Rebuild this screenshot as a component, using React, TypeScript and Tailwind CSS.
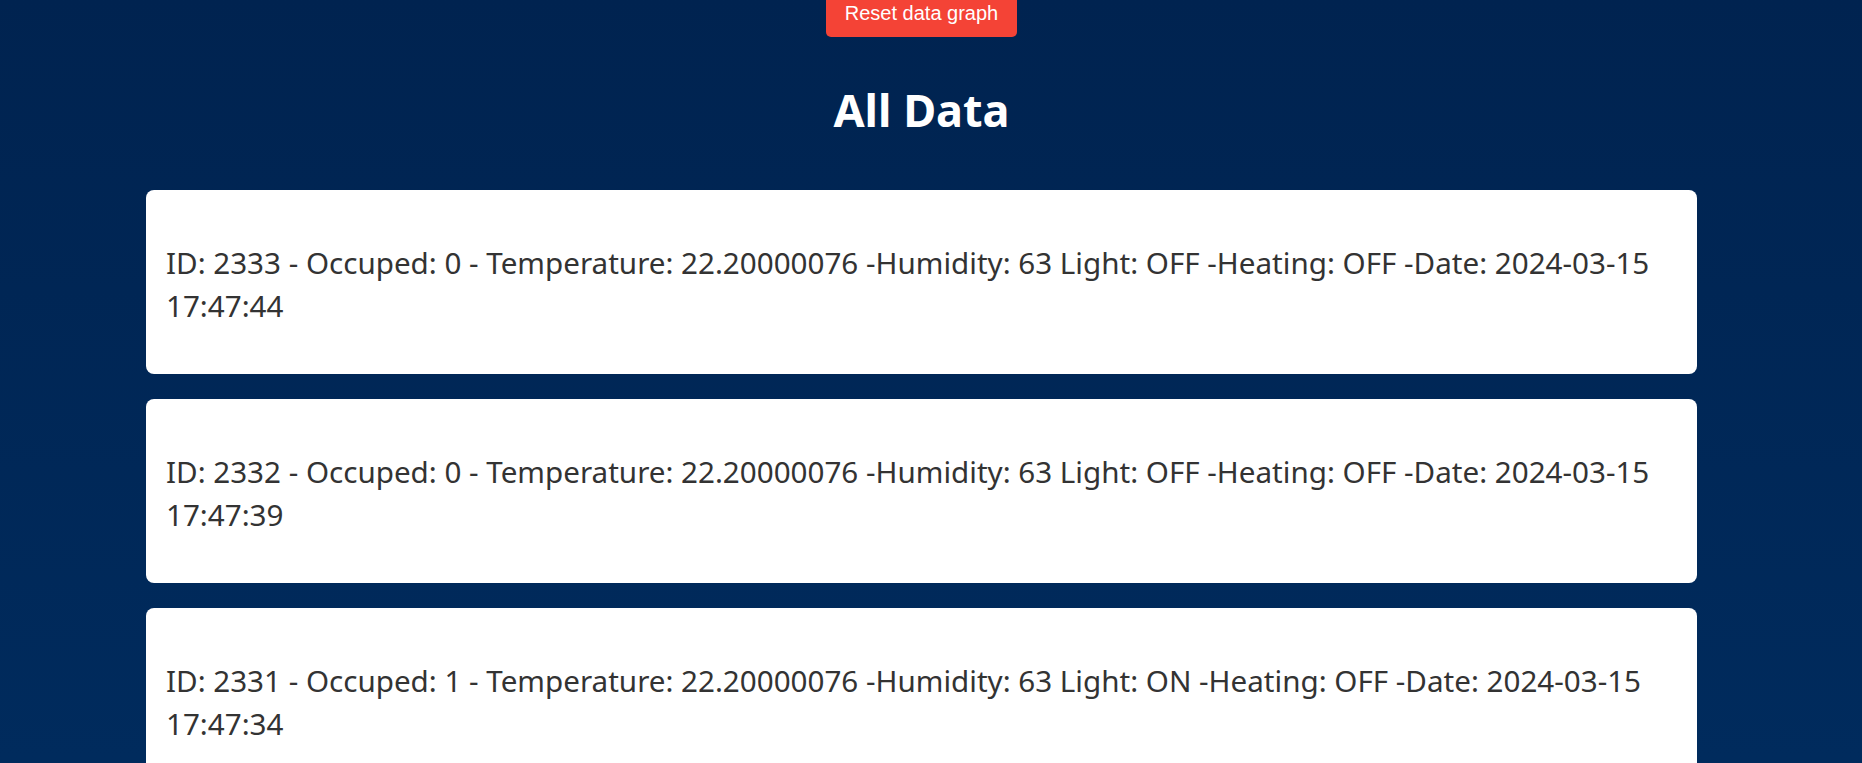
import React from 'react';

interface Reading {
  id: number;
  occupied: number;
  temperature: string;
  humidity: number;
  light: 'ON' | 'OFF';
  heating: 'ON' | 'OFF';
  date: string;
}

const READINGS: Reading[] = [
  { id: 2333, occupied: 0, temperature: '22.20000076', humidity: 63, light: 'OFF', heating: 'OFF', date: '2024-03-15 17:47:44' },
  { id: 2332, occupied: 0, temperature: '22.20000076', humidity: 63, light: 'OFF', heating: 'OFF', date: '2024-03-15 17:47:39' },
  { id: 2331, occupied: 1, temperature: '22.20000076', humidity: 63, light: 'ON', heating: 'OFF', date: '2024-03-15 17:47:34' },
  { id: 2330, occupied: 1, temperature: '22.20000076', humidity: 63, light: 'ON', heating: 'OFF', date: '2024-03-15 17:47:29' },
];

const DataCard: React.FC<{ r: Reading }> = ({ r }) => (
  <div className="bg-white rounded-lg px-5 pt-[51px] pb-[47px]">
    <p className="text-[#333333] text-[29.6px] leading-[43px] font-['Noto_Sans',sans-serif]">
      ID: {r.id} - Occuped: {r.occupied} - Temperature: {r.temperature} -Humidity: {r.humidity} Light: {r.light} -Heating: {r.heating} -Date: {r.date}
    </p>
  </div>
);

const App: React.FC = () => {
  return (
    <div className="min-h-screen bg-gradient-to-b from-[#002350] to-[#002e62] pr-[19px]">
      <div className="flex justify-center">
        <button className="bg-[#f44336] text-white font-['Liberation_Sans',Arial,sans-serif] text-[20px] leading-[23px] px-[19px] pt-[2px] pb-[12px] rounded-b-[5px]">
          Reset data graph
        </button>
      </div>

      <h1 className="text-center text-white font-bold text-[45px] leading-[56px] mt-[45px] font-['Noto_Sans',sans-serif]">
        All Data
      </h1>

      <div className="flex flex-col gap-[25px] px-[146px] mt-[52px] pb-10">
        {READINGS.map((r) => (
          <DataCard key={r.id} r={r} />
        ))}
      </div>
    </div>
  );
};

export default App;
